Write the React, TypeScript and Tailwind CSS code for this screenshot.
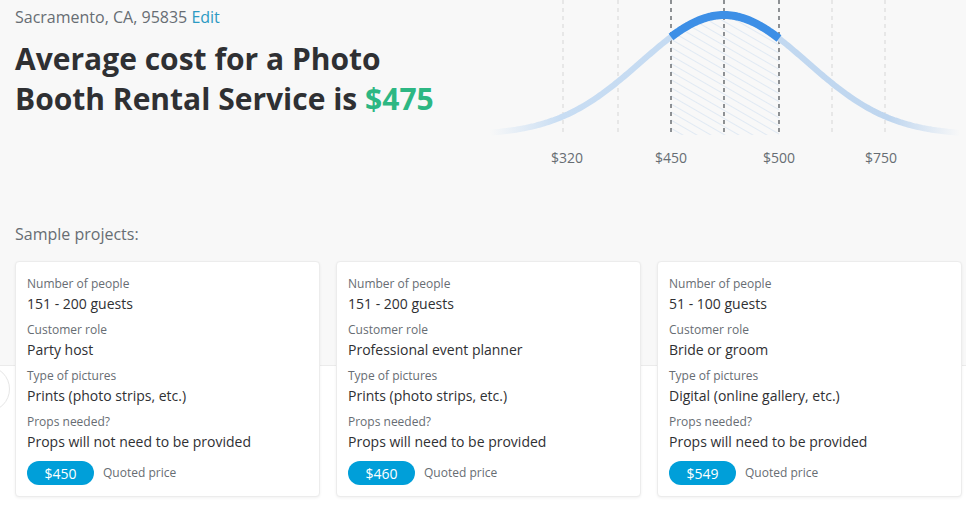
const FONT = "font-['Open_Sans','Lato',sans-serif]";

// bell curve geometry for the price chart
const MID = 234;
const BASE = 135;
const AMP = 120;
const TWO_SIGMA_SQ = 13900;
const curveY = (x: number) => BASE - AMP * Math.exp(-((x - MID) ** 2) / TWO_SIGMA_SQ);

const buildPath = (from: number, to: number) => {
  const pts: string[] = [];
  for (let x = from; x <= to; x += 2) {
    pts.push(`${pts.length === 0 ? "M" : "L"}${x.toFixed(1)},${curveY(x).toFixed(1)}`);
  }
  return pts.join(" ");
};

const LOW = 181;
const HIGH = 289;
const fullCurve = buildPath(0, 470);
const highlight = buildPath(LOW, HIGH);
const area = `${highlight} L${HIGH},${BASE} L${LOW},${BASE} Z`;

const GRID = [
  { x: 73, dark: false },
  { x: 128, dark: false },
  { x: LOW, dark: true },
  { x: MID, dark: true },
  { x: HIGH, dark: true },
  { x: 342, dark: false },
  { x: 395, dark: false },
];

const LABELS = [
  { x: 77, text: "$320" },
  { x: LOW, text: "$450" },
  { x: HIGH, text: "$500" },
  { x: 391, text: "$750" },
];

function PriceChart() {
  return (
    <svg width="476" height="170" viewBox="0 0 476 170" className="block">
      <defs>
        <pattern id="hatch" width="7" height="7" patternUnits="userSpaceOnUse" patternTransform="rotate(-60)">
          <line x1="0" y1="0" x2="0" y2="7" stroke="#c9dcf0" strokeWidth="1" />
        </pattern>
        <linearGradient id="fade" x1="0" y1="0" x2="1" y2="0">
          <stop offset="0" stopColor="#c8ddf3" stopOpacity="0" />
          <stop offset="0.15" stopColor="#c8ddf3" />
          <stop offset="0.85" stopColor="#bfd6ef" />
          <stop offset="1" stopColor="#bfd6ef" stopOpacity="0" />
        </linearGradient>
      </defs>
      <path d={area} fill="url(#hatch)" />
      {GRID.map((g) => (
        <line
          key={g.x}
          x1={g.x}
          y1="0"
          x2={g.x}
          y2={BASE}
          stroke={g.dark ? "#55595e" : "#d6d6d6"}
          strokeWidth={g.dark ? 1.3 : 1}
          strokeDasharray="4 4"
        />
      ))}
      <path d={fullCurve} fill="none" stroke="url(#fade)" strokeWidth="6" />
      <path d={highlight} fill="none" stroke="#3d8fe6" strokeWidth="8" />
      {LABELS.map((l) => (
        <text
          key={l.text}
          x={l.x}
          y="163"
          textAnchor="middle"
          fontSize="14"
          fill="#676d73"
          fontFamily="'Open Sans', Lato, sans-serif"
        >
          {l.text}
        </text>
      ))}
    </svg>
  );
}

const PROJECTS = [
  {
    people: "151 - 200 guests",
    role: "Party host",
    pictures: "Prints (photo strips, etc.)",
    props: "Props will not need to be provided",
    price: "$450",
  },
  {
    people: "151 - 200 guests",
    role: "Professional event planner",
    pictures: "Prints (photo strips, etc.)",
    props: "Props will need to be provided",
    price: "$460",
  },
  {
    people: "51 - 100 guests",
    role: "Bride or groom",
    pictures: "Digital (online gallery, etc.)",
    props: "Props will need to be provided",
    price: "$549",
  },
];

function Field({ label, value }: { label: string; value: string }) {
  return (
    <div className="mb-[8px]">
      <div className="text-[12px] leading-[16px] text-[#676d73]">{label}</div>
      <div className="mt-[2px] text-[14px] leading-[20px] text-[#2f3033]">{value}</div>
    </div>
  );
}

export default function App() {
  return (
    <div
      className={`${FONT} relative h-[511px] w-[966px] overflow-hidden bg-[linear-gradient(to_bottom,#f8f8f8_0,#f8f8f8_365px,#ebebeb_365px,#ebebeb_366px,#ffffff_366px)]`}
    >
      {/* carousel arrow peeking from behind the first card */}
      <div className="absolute left-[-36px] top-[366px] h-[46px] w-[46px] rounded-full border border-[#e6e6e6] bg-white" />

      <div className="flex">
        <div className="w-[476px] pl-[15px] pt-[7px]">
          <div className="text-[16px] leading-[20px] text-[#676d73]">
            Sacramento, CA, 95835 <span className="text-[#2c9ac3]">Edit</span>
          </div>
          <h1 className="mt-[12px] text-[30px] font-bold leading-[40px] text-[#2f3033]">
            Average cost for a Photo
            <br />
            Booth Rental Service is <span className="text-[#2db783]">$475</span>
          </h1>
        </div>
        <div className="ml-[14px]">
          <PriceChart />
        </div>
      </div>

      <div className="mt-[54px] pl-[15px] text-[16px] leading-[20px] text-[#676d73]">Sample projects:</div>

      <div className="relative mt-[17px] flex gap-[16px] pl-[15px]">
        {PROJECTS.map((p, i) => (
          <div
            key={i}
            className="w-[305px] rounded-[4px] border border-[#ececec] bg-white px-[11px] pt-[14px] pb-[11px] shadow-[0_1px_3px_rgba(0,0,0,0.06)]"
          >
            <Field label="Number of people" value={p.people} />
            <Field label="Customer role" value={p.role} />
            <Field label="Type of pictures" value={p.pictures} />
            <Field label="Props needed?" value={p.props} />
            <div className="mt-[9px] flex items-center">
              <span className="flex h-[24px] w-[67px] items-center justify-center rounded-full bg-[#009fd9] text-[14px] text-white">
                {p.price}
              </span>
              <span className="ml-[9px] text-[12px] text-[#676d73]">Quoted price</span>
            </div>
          </div>
        ))}
      </div>
    </div>
  );
}
